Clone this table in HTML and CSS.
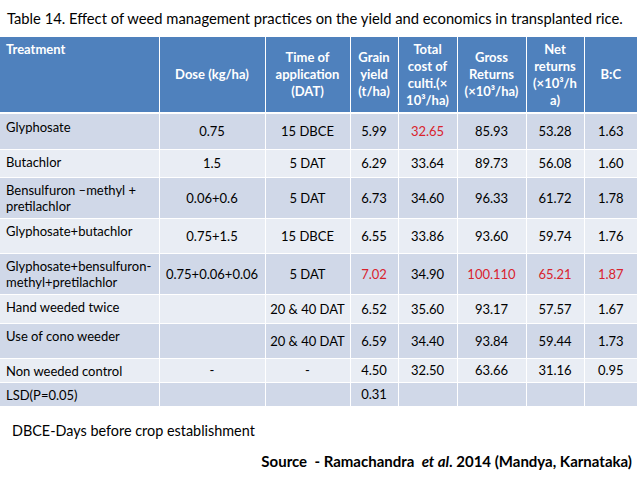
FILE: index.html
```html
<!DOCTYPE html>
<html>
<head>
<meta charset="utf-8">
<link rel="stylesheet" href="styles.css">
</head>
<body>
<div class="slide">
  <h1 class="title">Table 14. Effect of weed management practices on the yield and economics in transplanted rice.</h1>
  <table class="data">
    <colgroup>
      <col class="c1"><col class="c2"><col class="c3"><col class="c4"><col class="c5"><col class="c6"><col class="c7"><col class="c8">
    </colgroup>
    <thead>
      <tr class="hrow">
        <th class="first">Treatment</th>
        <th>Dose (kg/ha)</th>
        <th>Time of application (DAT)</th>
        <th>Grain yield (t/ha)</th>
        <th>Total cost of culti.(× 10³/ha)</th>
        <th>Gross Returns (×10³/ha)</th>
        <th>Net returns (×10³/h a)</th>
        <th>B:C</th>
      </tr>
    </thead>
    <tbody>
      <tr class="odd r1"><td class="first">Glyphosate</td><td>0.75</td><td>15 DBCE</td><td>5.99</td><td class="red">32.65</td><td>85.93</td><td>53.28</td><td>1.63</td></tr>
      <tr class="even r2"><td class="first">Butachlor</td><td>1.5</td><td>5 DAT</td><td>6.29</td><td>33.64</td><td>89.73</td><td>56.08</td><td>1.60</td></tr>
      <tr class="odd r3"><td class="first">Bensulfuron –methyl + pretilachlor</td><td>0.06+0.6</td><td>5 DAT</td><td>6.73</td><td>34.60</td><td>96.33</td><td>61.72</td><td>1.78</td></tr>
      <tr class="even r4"><td class="first">Glyphosate+butachlor</td><td>0.75+1.5</td><td>15 DBCE</td><td>6.55</td><td>33.86</td><td>93.60</td><td>59.74</td><td>1.76</td></tr>
      <tr class="odd r5"><td class="first">Glyphosate+bensulfuron-methyl+pretilachlor</td><td>0.75+0.06+0.06</td><td>5 DAT</td><td class="red">7.02</td><td>34.90</td><td class="red">100.110</td><td class="red">65.21</td><td class="red">1.87</td></tr>
      <tr class="even r6"><td class="first">Hand weeded twice</td><td></td><td>20 &amp; 40 DAT</td><td>6.52</td><td>35.60</td><td>93.17</td><td>57.57</td><td>1.67</td></tr>
      <tr class="odd r7"><td class="first">Use of cono weeder</td><td></td><td>20 &amp; 40 DAT</td><td>6.59</td><td>34.40</td><td>93.84</td><td>59.44</td><td>1.73</td></tr>
      <tr class="even r8"><td class="first">Non weeded control</td><td>-</td><td>-</td><td>4.50</td><td>32.50</td><td>63.66</td><td>31.16</td><td>0.95</td></tr>
      <tr class="odd r9"><td class="first">LSD(P=0.05)</td><td></td><td></td><td>0.31</td><td></td><td></td><td></td><td></td></tr>
    </tbody>
  </table>
  <p class="note">DBCE-Days before crop establishment</p>
  <p class="source">Source&nbsp; - Ramachandra&nbsp; <em>et al</em>. 2014 (Mandya, Karnataka)</p>
</div>
</body>
</html>
```

FILE: styles.css
```css
html, body {
  margin: 0;
  padding: 0;
  background: #ffffff;
}

.slide {
  width: 638px;
  height: 479px;
  font-family: Lato, "Open Sans", sans-serif;
  color: #000;
  display: flex;
  flex-direction: column;
}

.title {
  margin: 0;
  padding: 9px 0 0 7px;
  height: 28px;
  box-sizing: border-box;
  font-size: 14.75px;
  font-weight: normal;
  line-height: 18px;
  white-space: nowrap;
}

.data {
  margin-top: 9px;
  width: 637px;
  border-collapse: collapse;
  table-layout: fixed;
  font-size: 13px;
}

.c1 { width: 159px; }
.c2 { width: 106px; }
.c3 { width: 85px; }
.c4 { width: 48px; }
.c5 { width: 59px; }
.c6 { width: 69px; }
.c7 { width: 58px; }
.c8 { width: 53px; }

.data th,
.data td {
  border: 1px solid #ffffff;
  text-align: center;
  vertical-align: middle;
  padding: 0 2px;
  line-height: 16px;
}

.data tr > :first-child { border-left: none; }
.data tr > :last-child { border-right: none; }
.data thead tr th { border-top: none; }

.data th {
  background: #4f81bd;
  color: #ffffff;
  font-weight: bold;
  font-size: 13px;
  line-height: 17px;
  border-bottom: 2px solid #ffffff;
}

.data th.first {
  text-align: left;
  vertical-align: top;
  padding: 4px 6px;
}

.data td.first {
  text-align: left;
  vertical-align: top;
  padding: 4px 6px 0;
}

.hrow { height: 76px; }
.r1 { height: 36px; }
.r1 td.first { padding-top: 5px; }
.r2 { height: 28px; }
.r3 { height: 41px; }
.r4 { height: 35px; }
.r5 { height: 41px; }
.r5 td.first { padding-top: 4px; }
.r6 { height: 29px; }
.r7 { height: 35px; }
.r8 { height: 24px; }
.r9 { height: 24px; }

.odd td { background: #d0d8e8; }
.even td { background: #e9edf4; }

.red { color: #d9232d; }

.note {
  margin: 15px 0 0 12px;
  font-size: 14.4px;
  line-height: 18px;
}

.source {
  margin: 12px 6px 0 0;
  text-align: right;
  font-size: 15px;
  font-weight: bold;
  line-height: 18px;
}

.source em { font-style: italic; }
```
